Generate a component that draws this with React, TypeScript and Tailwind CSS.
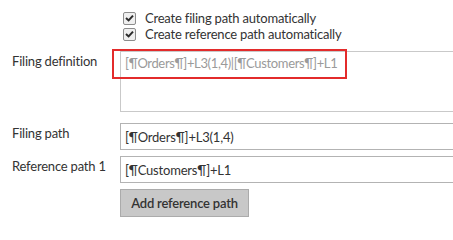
import React from "react";

function Check() {
  return (
    <span className="flex h-[13px] w-[13px] shrink-0 items-center justify-center rounded-[2px] border border-[#8c8c8c] bg-[#efefef]">
      <svg width="9" height="8" viewBox="0 0 9 8">
        <polyline points="1,4 3.6,6.4 8,1.6" fill="none" stroke="#2b2b2b" strokeWidth="2" />
      </svg>
    </span>
  );
}

export default function App() {
  return (
    <div
      className="relative h-[220px] w-[453px] overflow-hidden bg-white text-[13px] leading-[18px] tracking-[-0.2px] text-[#333]"
      style={{ fontFamily: "Lato, 'Noto Sans', sans-serif" }}
    >
      <div className="flex flex-col pl-[123px] pt-[10px]">
        <label className="flex h-[16px] items-center gap-[9px] whitespace-nowrap">
          <Check />
          <span>Create filing path automatically</span>
        </label>
        <label className="flex h-[16px] items-center gap-[9px] whitespace-nowrap">
          <Check />
          <span>Create reference path automatically</span>
        </label>
      </div>

      <div className="mt-[9px] flex">
        <div className="w-[120px] shrink-0 whitespace-nowrap pl-[12px] pt-[1px]">Filing definition</div>
        <div className="h-[61px] w-[360px] shrink-0 whitespace-nowrap border border-[#c9c9c9] px-[4px] pt-[2px] tracking-[-0.35px] text-[#9a9a9a]">
          [¶Orders¶]+L3(1,4)|[¶Customers¶]+L1
        </div>
      </div>

      <div className="mt-[11px] flex">
        <div className="w-[120px] shrink-0 whitespace-nowrap pl-[12px] pt-[1px]">Filing path</div>
        <div className="flex h-[27px] w-[360px] shrink-0 items-center whitespace-nowrap border border-[#b3b3b3] px-[4px]">
          [¶Orders¶]+L3(1,4)
        </div>
      </div>

      <div className="mt-[6px] flex">
        <div className="w-[120px] shrink-0 whitespace-nowrap pl-[12px] pt-[1px]">Reference path 1</div>
        <div className="flex h-[27px] w-[360px] shrink-0 items-center whitespace-nowrap border border-[#b3b3b3] px-[4px]">
          [¶Customers¶]+L1
        </div>
      </div>

      <div className="mt-[6px] pl-[120px]">
        <button className="flex h-[28px] w-[129px] items-center justify-center whitespace-nowrap border border-[#ababab] bg-[#c8c8c8] font-semibold text-[#333]">
          Add reference path
        </button>
      </div>

      <div className="absolute left-[112px] top-[49px] h-[30px] w-[235px] border-2 border-[#e32b2b]" />
    </div>
  );
}
